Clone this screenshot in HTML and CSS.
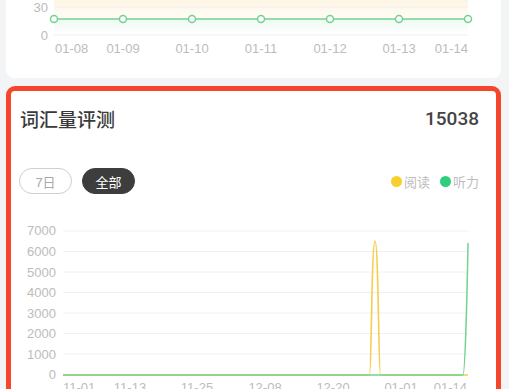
FILE: index.html
```html
<!DOCTYPE html>
<html lang="zh-CN">
<head>
  <meta charset="UTF-8">
  <meta name="viewport" content="width=device-width, initial-scale=1.0">
  <title>学习统计</title>
  <link rel="stylesheet" href="styles.css">
</head>
<body>
  <div class="card card-top">
    <svg class="chart" width="495" height="78" viewBox="0 0 495 78">
      <defs>
        <linearGradient id="cream" x1="0" y1="0" x2="0" y2="1">
          <stop offset="0" stop-color="#fdf5e4"/>
          <stop offset="1" stop-color="#fffdf8"/>
        </linearGradient>
        <linearGradient id="mint" x1="0" y1="0" x2="0" y2="1">
          <stop offset="0" stop-color="#eefaf2"/>
          <stop offset="1" stop-color="#ffffff"/>
        </linearGradient>
      </defs>
      <g transform="translate(-6,0)">
        <rect x="54" y="0" width="414" height="19" fill="url(#cream)"/>
        <rect x="54" y="19" width="414" height="16" fill="url(#mint)"/>
        <line class="grid" x1="54" y1="7" x2="468" y2="7"/>
        <line class="grid" x1="54" y1="35" x2="468" y2="35"/>
        <text class="axis" x="48" y="12" text-anchor="end">30</text>
        <text class="axis" x="48" y="40" text-anchor="end">0</text>
        <line class="line-green" x1="54" y1="19" x2="468" y2="19"/>
        <g class="dots">
          <circle cx="54" cy="19" r="3.5"/>
          <circle cx="123" cy="19" r="3.5"/>
          <circle cx="192" cy="19" r="3.5"/>
          <circle cx="261" cy="19" r="3.5"/>
          <circle cx="330" cy="19" r="3.5"/>
          <circle cx="399" cy="19" r="3.5"/>
          <circle cx="468" cy="19" r="3.5"/>
        </g>
        <text class="axis" x="55" y="53">01-08</text>
        <text class="axis" x="123" y="53" text-anchor="middle">01-09</text>
        <text class="axis" x="192" y="53" text-anchor="middle">01-10</text>
        <text class="axis" x="261" y="53" text-anchor="middle">01-11</text>
        <text class="axis" x="330" y="53" text-anchor="middle">01-12</text>
        <text class="axis" x="399" y="53" text-anchor="middle">01-13</text>
        <text class="axis" x="468" y="53" text-anchor="end">01-14</text>
      </g>
    </svg>
  </div>

  <div class="card card-vocab">
    <div class="card-head">
      <span class="title">词汇量评测</span>
      <span class="total">15038</span>
    </div>

    <div class="controls">
      <div class="tabs">
        <span class="pill">7日</span>
        <span class="pill active">全部</span>
      </div>
      <div class="legend">
        <span class="legend-item"><i class="dot yellow"></i>阅读</span>
        <span class="legend-item"><i class="dot green"></i>听力</span>
      </div>
    </div>

    <svg class="chart" width="485" height="200" viewBox="0 0 485 200">
      <g transform="translate(-11,-200)">
        <line class="grid" x1="63" y1="231" x2="468" y2="231"/>
        <line class="grid" x1="63" y1="251.5" x2="468" y2="251.5"/>
        <line class="grid" x1="63" y1="272" x2="468" y2="272"/>
        <line class="grid" x1="63" y1="292.5" x2="468" y2="292.5"/>
        <line class="grid" x1="63" y1="313" x2="468" y2="313"/>
        <line class="grid" x1="63" y1="333.5" x2="468" y2="333.5"/>
        <line class="grid" x1="63" y1="354" x2="468" y2="354"/>

        <text class="axis" x="56" y="235" text-anchor="end">7000</text>
        <text class="axis" x="56" y="256" text-anchor="end">6000</text>
        <text class="axis" x="56" y="277" text-anchor="end">5000</text>
        <text class="axis" x="56" y="297" text-anchor="end">4000</text>
        <text class="axis" x="56" y="318" text-anchor="end">3000</text>
        <text class="axis" x="56" y="338" text-anchor="end">2000</text>
        <text class="axis" x="56" y="359" text-anchor="end">1000</text>
        <text class="axis" x="56" y="379" text-anchor="end">0</text>

        <!-- reading spike around 12-28 -->
        <path class="line-yellow" d="M63 375 L369.5 375 C371.5 375 371.5 241 375 241 C378.5 241 378.5 375 380.5 375 L468 375"/>
        <path class="line-green" d="M63 375 L463 375 C465 375 467 300 468 243"/>

        <text class="axis" x="63" y="392">11-01</text>
        <text class="axis" x="130" y="392" text-anchor="middle">11-13</text>
        <text class="axis" x="197" y="392" text-anchor="middle">11-25</text>
        <text class="axis" x="265" y="392" text-anchor="middle">12-08</text>
        <text class="axis" x="333" y="392" text-anchor="middle">12-20</text>
        <text class="axis" x="401" y="392" text-anchor="middle">01-01</text>
        <text class="axis" x="467" y="392" text-anchor="end">01-14</text>
      </g>
    </svg>
  </div>
</body>
</html>
```

FILE: styles.css
```css
body {
  margin: 0;
  background: #f3f4f5;
  font-family: "Liberation Sans", "Noto Sans CJK SC", sans-serif;
  color: #333;
}

.card {
  background: #fff;
  margin: 0 8px 0 6px;
}

.card-top {
  height: 78px;
  border-radius: 0 0 8px 8px;
}

.chart {
  display: block;
}

.grid {
  stroke: #f0f0f0;
  stroke-width: 1;
}

.axis {
  fill: #bcbcbc;
  font-size: 13px;
  font-family: "Liberation Sans", sans-serif;
}

.line-green {
  fill: none;
  stroke: #72d390;
  stroke-width: 1.5;
}

.line-yellow {
  fill: none;
  stroke: #f6cd4f;
  stroke-width: 1.6;
}

.dots circle {
  fill: #fff;
  stroke: #72d390;
  stroke-width: 1.5;
}

.card-vocab {
  margin-top: 8px;
  border: 5px solid #f5462c;
  border-radius: 9px;
  height: 340px;
}

.card-head {
  display: flex;
  justify-content: space-between;
  align-items: center;
  padding: 16px 17px 0 9px;
  height: 22px;
}

.title {
  font-family: "Noto Sans CJK SC", sans-serif;
  font-size: 19px;
  font-weight: 500;
  color: #3a3a3a;
}

.total {
  font-family: Roboto, "Liberation Sans", sans-serif;
  font-size: 19px;
  font-weight: 500;
  color: #444;
}

.controls {
  display: flex;
  justify-content: space-between;
  align-items: center;
  margin-top: 39px;
  padding: 0 17px 0 8px;
}

.tabs {
  display: flex;
  gap: 10px;
}

.pill {
  box-sizing: border-box;
  width: 53px;
  height: 26px;
  border-radius: 13px;
  border: 1px solid #cfcfcf;
  color: #a8a8a8;
  font-size: 13px;
  display: flex;
  align-items: center;
  justify-content: center;
}

.pill.active {
  background: #3d3d3d;
  border-color: #3d3d3d;
  color: #fff;
}

.legend {
  display: flex;
  gap: 10px;
  font-size: 13px;
  color: #bdbdbd;
}

.legend-item {
  display: flex;
  align-items: center;
}

.dot {
  width: 11px;
  height: 11px;
  border-radius: 50%;
  margin-right: 2px;
}

.dot.yellow {
  background: #f7cf2f;
}

.dot.green {
  background: #2dcf7a;
}

.card-vocab .chart {
  margin-top: 6px;
}
```
